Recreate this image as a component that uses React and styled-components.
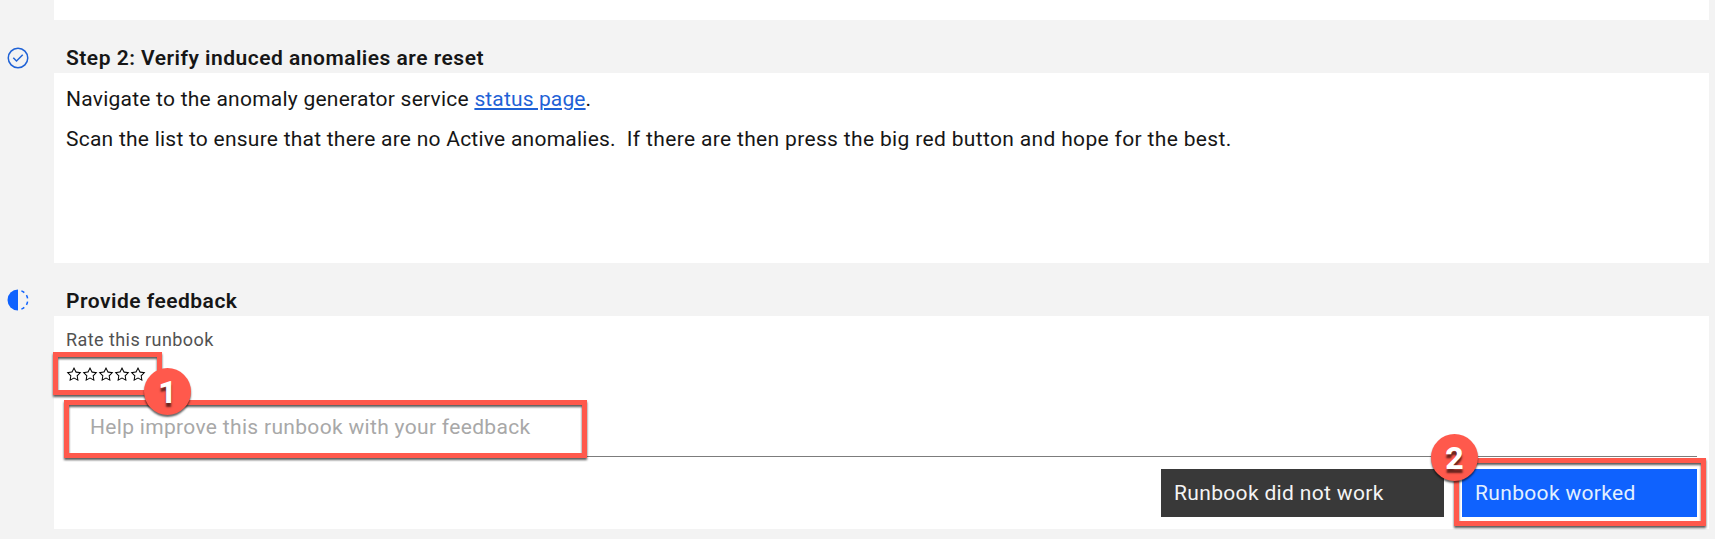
import React from 'react';
import styled, { createGlobalStyle } from 'styled-components';

const GlobalStyle = createGlobalStyle`
  *, *::before, *::after { box-sizing: border-box; }
  body {
    margin: 0;
    background: #f3f3f3;
    color: #161616;
    font-family: Roboto, "Liberation Sans", sans-serif;
    font-size: 21px;
    font-weight: 400;
    overflow: hidden;
  }
`;

const Page = styled.main`
  display: flex;
  flex-direction: column;
  height: 539px;
  padding-right: 6px;
`;

const Section = styled.section`
  display: grid;
  grid-template-columns: 54px 1fr;
`;

const Gutter = styled.div`
  padding: ${(p) => p.$top}px 0 0 6px;
  svg { display: block; }
`;

const Title = styled.h2`
  height: 53px;
  margin: 0;
  padding: 24px 0 0 12px;
  font-size: 21px;
  font-weight: 600;
  line-height: 28px;
  letter-spacing: 0.49px;
`;

const Panel = styled.div`
  height: ${(p) => p.$height}px;
  padding: ${(p) => p.$top || 0}px 12px 12px 12px;
  background: #fff;
`;

const PreviousPanel = styled(Panel)`
  margin-left: 54px;
`;

const Paragraph = styled.p`
  margin: 0;
  line-height: 40px;
  letter-spacing: 0.24px;
  white-space: pre;
`;

const Wide = styled.span`
  letter-spacing: 0.34px;
`;

const Link = styled.a`
  color: #1f62d6;
  letter-spacing: 0.13px;
  text-decoration: underline;
  text-decoration-thickness: 2px;
  text-underline-offset: 2px;
`;

const RateLabel = styled.div`
  color: #525252;
  font-size: 18px;
  line-height: 24px;
  letter-spacing: 0.43px;
`;

const Rating = styled.div`
  position: relative;
  display: flex;
  width: 80px;
  margin-top: 14px;
`;

const Field = styled.div`
  position: relative;
  height: 57px;
  margin-top: 18px;
  border-bottom: 1px solid #7c7c7c;
`;

const Input = styled.input`
  display: block;
  width: 100%;
  height: 54px;
  padding: 0 24px;
  border: 0;
  outline: 0;
  background: transparent;
  font: inherit;
  letter-spacing: 0.32px;
  &::placeholder { color: #a8a8a8; opacity: 1; }
`;

const Actions = styled.div`
  display: flex;
  justify-content: flex-end;
  gap: 18px;
  margin-top: 12px;
`;

const Button = styled.button`
  width: ${(p) => p.$width}px;
  height: 48px;
  padding: 0 13px;
  border: 0;
  background: ${(p) => (p.$primary ? '#0f62fe' : '#393939')};
  color: ${(p) => (p.$primary ? '#e2f0ff' : '#f4f4f4')};
  font: inherit;
  letter-spacing: 0.34px;
  text-align: left;
`;

const ButtonAnchor = styled.div`
  position: relative;
  display: flex;
`;

const Highlight = styled.div`
  position: absolute;
  z-index: 1;
  border: 5px solid #ff594c;
  filter: drop-shadow(0 2px 1px rgba(0, 0, 0, 0.65));
  pointer-events: none;
`;

const RatingHighlight = styled(Highlight)`
  left: -13px;
  top: -14px;
  width: 109px;
  height: 43px;
`;

const FieldHighlight = styled(Highlight)`
  left: -2px;
  top: 0;
  width: 523px;
  height: 58px;
`;

const ButtonHighlight = styled(Highlight)`
  left: -8px;
  top: -11px;
  width: 252px;
  height: 68px;
`;

const Badge = styled.div`
  position: absolute;
  z-index: 2;
  width: 47px;
  height: 47px;
  border-radius: 50%;
  background: #ff594c;
  box-shadow: 0 2px 2px rgba(0, 0, 0, 0.6);
  color: #fff;
  font-size: 32px;
  font-weight: 800;
  line-height: 48px;
  text-align: center;
  text-shadow: 0 4px 2px rgba(0, 0, 0, 0.6);
`;

const RatingBadge = styled(Badge)`
  left: 78px;
  top: 2px;
`;

const ButtonBadge = styled(Badge)`
  left: -31px;
  top: -35px;
`;

const CompleteIcon = () => (
  <svg width="24" height="24" viewBox="0 0 32 32" fill="#1f62d6">
    <path d="M14 21.414 9 16.413 10.413 15 14 18.586 21.585 11 23 12.415z" />
    <path d="M16,2A14,14,0,1,0,30,16,14,14,0,0,0,16,2Zm0,26A12,12,0,1,1,28,16,12,12,0,0,1,16,28Z" />
  </svg>
);

const InProgressIcon = () => (
  <svg width="24" height="24" viewBox="0 0 32 32" fill="#0f62fe">
    <path d="M23.7642 6.8593l1.2851-1.5315A13.976 13.976 0 0020.8672 2.887l-.6836 1.8776A11.9729 11.9729 0 0123.7642 6.8593z" />
    <path d="M27.81 14l1.9677-.4128A13.8888 13.8888 0 0028.14 9.0457L26.4087 10A12.52 12.52 0 0127.81 14z" />
    <path d="M20.1836 27.2354l.6836 1.8776a13.976 13.976 0 004.1821-2.4408l-1.2851-1.5315A11.9729 11.9729 0 0120.1836 27.2354z" />
    <path d="M26.4087 22L28.14 23a14.14 14.14 0 001.6382-4.5872L27.81 18.0659A12.1519 12.1519 0 0126.4087 22z" />
    <path d="M16 30V2a14 14 0 000 28z" />
  </svg>
);

const StarIcon = () => (
  <svg width="16" height="16" viewBox="0 0 32 32" fill="#000">
    <path d="M16,6.52l2.76,5.58.46,1,1,.15,6.16.89L22,18.44l-.75.73.18,1,1.05,6.13-5.51-2.89L16,23l-.93.49L9.56,26.34l1-6.13.18-1L10,18.44,5.58,14.09l6.16-.89,1-.15.46-1L16,6.52M16,2l-4.55,9.22L1.28,12.69l7.36,7.18L6.9,30,16,25.22,25.1,30,23.36,19.87l7.36-7.17L20.55,11.22Z" />
  </svg>
);

export default function App() {
  return (
    <>
      <GlobalStyle />
      <Page>
        <PreviousPanel $height={20} />
        <Section>
          <Gutter $top={26}><CompleteIcon /></Gutter>
          <div>
            <Title>Step 2: Verify induced anomalies are reset</Title>
            <Panel $height={190} $top={6}>
              <Paragraph>
                Navigate to the anomaly generator service <Link href="#status">status page</Link>.
              </Paragraph>
              <Paragraph>
                {'Scan the list to ensure that there are no Active anomalies.\u00a0 '}
                <Wide>If there are then press the big red button and hope for the best.</Wide>
              </Paragraph>
            </Panel>
          </div>
        </Section>
        <Section>
          <Gutter $top={25}><InProgressIcon /></Gutter>
          <div>
            <Title>Provide feedback</Title>
            <Panel $height={213} $top={12}>
              <RateLabel>Rate this runbook</RateLabel>
              <Rating>
                {[1, 2, 3, 4, 5].map((n) => <StarIcon key={n} />)}
                <RatingHighlight />
                <RatingBadge>1</RatingBadge>
              </Rating>
              <Field>
                <Input placeholder="Help improve this runbook with your feedback" />
                <FieldHighlight />
              </Field>
              <Actions>
                <Button $width={283}>Runbook did not work</Button>
                <ButtonAnchor>
                  <Button $width={235} $primary>Runbook worked</Button>
                  <ButtonHighlight />
                  <ButtonBadge>2</ButtonBadge>
                </ButtonAnchor>
              </Actions>
            </Panel>
          </div>
        </Section>
      </Page>
    </>
  );
}
